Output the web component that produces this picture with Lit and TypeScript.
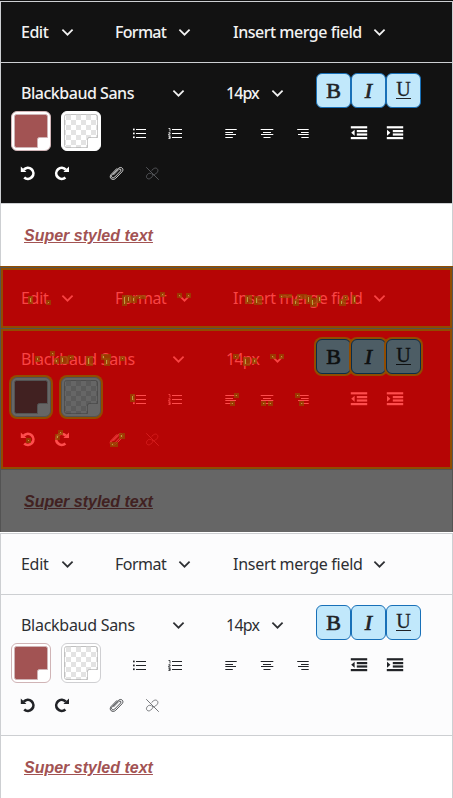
import { LitElement, html, css, svg } from "lit";
import { customElement, property } from "lit/decorators.js";

type Theme = "dark" | "diff" | "light";

/** Row/column segments [x, y, width] drawn as one pixel strokes. */
const bars = (rows: number[][], h = 1) =>
  rows.map(([x, y, w]) => svg`<rect x=${x} y=${y} width=${w} height=${h}></rect>`);

const ICONS: Record<string, unknown> = {
  bullets: svg`${bars([[15, 18, 10], [15, 22, 10], [15, 26, 10]])}
    <rect x="12" y="17.6" width="1.7" height="1.7"></rect><rect x="12" y="21.6" width="1.7" height="1.7"></rect><rect x="12" y="25.4" width="1.7" height="1.7"></rect>`,
  numbers: svg`${bars([[15, 18, 10], [15, 22, 10], [15, 26, 10]])}
    <path d="M11.5 17.5h1.5v3M11.5 21.7h1.6v1.3h-1.4v1.2h1.8M11.5 25.4h1.7v2.1h-1.8M11.8 26.4h1.4" fill="none" stroke="currentColor" stroke-width=".8"></path>`,
  left: bars([[12.3, 18, 11.4], [12.3, 21, 7.7], [12.3, 23, 10.7], [12.3, 26, 7.5]]),
  center: bars([[11.7, 18, 12.6], [14, 21, 8], [12, 23, 12.3], [14.5, 26, 7]]),
  right: bars([[12.2, 18, 11.5], [16, 21, 7.7], [13, 23, 10.7], [16.3, 26, 7.4]]),
  outdent: svg`${bars([[9.8, 15.2, 16.4], [9.8, 26, 16.4]], 2.2)}${bars([[15.8, 19, 10.4], [15.8, 22.4, 10.4]], 2.2)}
    <path d="M10.2 21.8l3.4-3v6z"></path>`,
  indent: svg`${bars([[9.8, 15.2, 16.4], [9.8, 26, 16.4]], 2.2)}${bars([[15.8, 19, 10.4], [15.8, 22.4, 10.4]], 2.2)}
    <path d="M13.4 21.8L10 18.800v6z"></path>`,
  undo: svg`<path d="M12.800 16.6A5.500 5.500 0 1 1 13.200 24.4" fill="none" stroke="currentColor" stroke-width="2.7"></path><path d="M9.8 13.4l1.8 1.8 3.8 3.7H9.8z"></path>`,
  redo: svg`<path d="M20.800 16.6A5.500 5.500 0 1 0 20.400 24.4" fill="none" stroke="currentColor" stroke-width="2.7"></path><path d="M24 13.4l-1.8 1.8-3.8 3.7H24z"></path>`,
  clip: svg`<path d="M14.6 21.800l5.300-5.400c1.300-1.100 2.800.300 1.700 1.600l-5.900 6.100c-2.100 1.900-4.400-.400-2.500-2.400l6.300-6.400c2.600-2.300 5.900.600 3.700 3.300l-6.500 6.700c-3.200 2.900-7.300-.500-4.600-3.800l5.700-5.900" fill="none" stroke="currentColor" stroke-width=".8" stroke-linecap="round"></path>`,
  unlink: svg`<path d="M11.5 14.5l12 12M16.8 17.4l1.6-1.5c2.9-2.4 6 .9 3.7 3.5l-1.7 1.7c-1.2 1-2.5.9-3.6 0M15.8 20.6c-1-.6-2-.4-2.9.4l-.7.8c-2.2 2.6.9 5.5 3.4 3.4l1.6-1.6c.8-.8.9-1.6.6-2.5" fill="none" stroke="currentColor" stroke-width="1" stroke-linecap="round"></path>`,
};

/** Changed-pixel clusters, relative to the panel: x, y, width, height. */
const MARKS = [
  [28, 30, 5, 8], [46, 34, 5, 5],
  [122, 29, 5, 11], [126, 29, 6, 8], [131, 30, 6, 7], [137, 29, 9, 4], [160, 26, 5, 5],
  [177, 27, 5, 5], [186, 27, 5, 5],
  [35, 90, 5, 6], [50, 85, 5, 5], [54, 92, 5, 6], [60, 90, 9, 8], [68, 89, 6, 5],
  [86, 90, 7, 10], [101, 88, 10, 6], [104, 92, 6, 8], [120, 90, 5, 5],
  [245, 29, 7, 9], [254, 30, 8, 9], [279, 28, 13, 4], [293, 33, 6, 7], [297, 28, 10, 5],
  [306, 29, 6, 9], [310, 32, 7, 9], [317, 29, 4, 8], [339, 33, 7, 7], [343, 29, 5, 5], [352, 29, 4, 9],
  [233, 88, 6, 5], [243, 91, 7, 9], [252, 92, 5, 6], [270, 88, 6, 5], [279, 88, 5, 5],
  [234, 127, 5, 5], [230, 135, 5, 5], [261, 135, 5, 5], [268, 135, 5, 5], [295, 127, 5, 5], [299, 135, 5, 5],
  [130, 128, 5, 8], [26, 172, 5, 5], [58, 164, 5, 5], [55, 168, 5, 6], [119, 167, 6, 6], [110, 176, 8, 5],
];

@customElement("editor-panel")
class EditorPanel extends LitElement {
  @property({ reflect: true }) theme: Theme = "light";

  static styles = css`
    :host {
      display: flex; flex-direction: column; position: relative; box-sizing: border-box;
      height: 266px; padding-top: 1px; overflow: hidden;
      font: 16px/24px "Noto Sans", sans-serif;
      background: var(--gap);
      --gap: #fff; --line: #cdcfd2; --bar: #fcfcfd; --page: #fff; --fg: #2d2f33; --icon: #212327;
      --on: #c1e8fb; --on-line: #1870b8; --on-fg: #212327; --off: #75777b;
      --paper: #fff; --paper-line: #cfcfd2; --ink: #a25353; --ink-line: #d0b4b6; --check: #e3e3e3; --track: 0px;
    }
    :host([theme="dark"]) { --gap: #121212; --bar: #121212; --fg: #f2f2f2; --icon: #fff; --off: #55565a; --paper-line: #fff; --track: -0.2px; font-weight: 500; }
    :host([theme="diff"]) {
      --gap: #914c00; --line: #535353; --bar: #b60505; --page: #666; --fg: #f94444; --icon: #ff4d4d;
      --on: #4d5d65; --on-line: #0a2d4a; --on-fg: #0e1011; --off: #d41c1c;
      --paper: #666; --paper-line: #535353; --ink: #412121; --ink-line: #535353; --check: #5b5b5b;
    }
    .frame { flex: 1; display: flex; flex-direction: column; border: 1px solid var(--line); border-bottom: 0; background: var(--page); }
    .menu, .tools { box-sizing: border-box; background: var(--bar); border-bottom: 1px solid var(--line); color: var(--fg); }
    .menu { height: 61px; padding-left: 20px; display: grid; grid-template-columns: 41px 53px 64px 54px 141px 20px; align-items: center; }
    .tools { height: 141px; padding-top: 10px; }
    :host([theme="diff"]) .menu, :host([theme="diff"]) .tools { box-shadow: inset 0 0 0 2px #914c00; }
    .fonts { height: 35px; padding-left: 20px; display: grid; grid-template-columns: 152px 53px 46px 44px 105px; align-items: center; }
    .label { white-space: nowrap; letter-spacing: calc(-0.28px + var(--track)); }
    .fonts .label, .fonts .chevron { margin-top: 5px; }
    .word { letter-spacing: calc(-0.5px + var(--track)); }
    .size { letter-spacing: calc(-0.75px + var(--track)); }
    .chevron { width: 13px; height: 9px; fill: none; stroke: currentColor; stroke-width: 1.7; display: block; margin-left: -1px; }
    .styles { display: flex; }
    .toggle {
      box-sizing: border-box; width: 35px; height: 35px; border: 1px solid var(--on-line); border-radius: 6px;
      background: var(--on); color: var(--on-fg); display: flex; justify-content: center;
      font: 22px/33px "Liberation Serif", serif; -webkit-text-stroke: .7px;
    }
    :host([theme="diff"]) .toggle { box-shadow: 0 0 0 2px #914c00; }
    .italic { font-style: italic; }
    .under { font-size: 20px; -webkit-text-stroke: .3px; }
    .under span { box-sizing: border-box; height: 25px; border-bottom: 1px solid; line-height: 31px; }
    .row { display: flex; gap: 20px; padding-left: 10px; height: 40px; margin-top: 3px; }
    .row.last { margin-top: 2px; }
    .group { display: flex; }
    .swatches { gap: 10px; }
    .icon { width: 36px; height: 40px; display: block; color: var(--icon); fill: currentColor; }
    .last .icon { width: 34px; }
    .last .link { width: 36px; }
    .icon.off { color: var(--off); }
    .swatch {
      box-sizing: border-box; width: 40px; height: 40px; padding: 2px; border: 1px solid var(--paper-line);
      border-radius: 6px; background: var(--paper);
    }
    .swatch.ink { border-color: var(--ink-line); }
    :host([theme="diff"]) .swatch { box-shadow: 0 0 0 2px #914c00; }
    .swatch svg { display: block; width: 34px; height: 34px; }
    .content {
      padding: 20px 0 0 23px; color: var(--ink); font: italic bold 16px/24px "Liberation Sans", sans-serif;
      text-decoration: underline;
    }
    .marks { position: absolute; inset: 0; width: 453px; height: 266px; }
    .halo { fill: #914c00; fill-opacity: .72; }
    .dot { fill: #b9a040; }
  `;

  private chevron() {
    return html`<svg class="chevron" viewBox="0 0 13 9"><path d="M1.4 1.6l5.1 5.1 5.1-5.1"></path></svg>`;
  }

  private icon(name: string, cls = "") {
    const wide = name === "undo" || name === "redo" ? 34 : 36;
    return html`<svg class="icon ${cls}" viewBox="0 0 ${wide} 40">${ICONS[name]}</svg>`;
  }

  private swatch(filled: boolean) {
    const shape = "M2.5 .5h29a2 2 0 0 1 2 2V23.500h-8a2 2 0 0 0-2 2V33.500H2.500A2 2 0 0 1 .5 31.500V2.500A2 2 0 0 1 2.500 .5z";
    return html`<div class="swatch ${filled ? "ink" : ""}">
      <svg viewBox="0 0 34 34">
        <defs><pattern id="checks" width="10" height="10" x="2" y="1" patternUnits="userSpaceOnUse">
          <path d="M0 0h5v5H0zM5 5h5v5H5z" fill="var(--check)"></path></pattern></defs>
        <path d=${shape} fill=${filled ? "var(--ink)" : "url(#checks)"} stroke=${filled ? "var(--ink-line)" : "#00000033"}></path>
      </svg></div>`;
  }

  render() {
    return html`
      <div class="frame">
        <div class="menu">
          <span class="label">Edit</span>${this.chevron()}
          <span class="label word">Format</span>${this.chevron()}
          <span class="label">Insert merge field</span>${this.chevron()}
        </div>
        <div class="tools">
          <div class="fonts">
            <span class="label">Blackbaud Sans</span>${this.chevron()}
            <span class="label size">14px</span>${this.chevron()}
            <div class="styles">
              <div class="toggle">B</div>
              <div class="toggle italic">I</div>
              <div class="toggle under"><span>U</span></div>
            </div>
          </div>
          <div class="row">
            <div class="group swatches">${this.swatch(true)}${this.swatch(false)}</div>
            <div class="group">${this.icon("bullets")}${this.icon("numbers")}</div>
            <div class="group">${this.icon("left")}${this.icon("center")}${this.icon("right")}</div>
            <div class="group">${this.icon("outdent")}${this.icon("indent")}</div>
          </div>
          <div class="row last">
            <div class="group">${this.icon("undo")}${this.icon("redo")}</div>
            <div class="group">${this.icon("clip", "link")}${this.icon("unlink", "link off")}</div>
          </div>
        </div>
        <div class="content">Super styled text</div>
      </div>
      ${this.theme === "diff"
        ? html`<svg class="marks" viewBox="0 0 453 266">${MARKS.map(
            ([x, y, w, h]) => svg`<rect class="halo" x=${x} y=${y} width=${w} height=${h}></rect>
              <rect class="dot" x=${x + 2} y=${y + 2} width="1" height=${Math.max(1, h - 4)}></rect>`
          )}</svg>`
        : ""}
    `;
  }
}

@customElement("app-root")
class AppRoot extends LitElement {
  static styles = css`
    :host { display: block; width: 453px; height: 798px; overflow: hidden; }
  `;

  render() {
    return html`
      <editor-panel theme="dark"></editor-panel>
      <editor-panel theme="diff"></editor-panel>
      <editor-panel theme="light"></editor-panel>
    `;
  }
}
